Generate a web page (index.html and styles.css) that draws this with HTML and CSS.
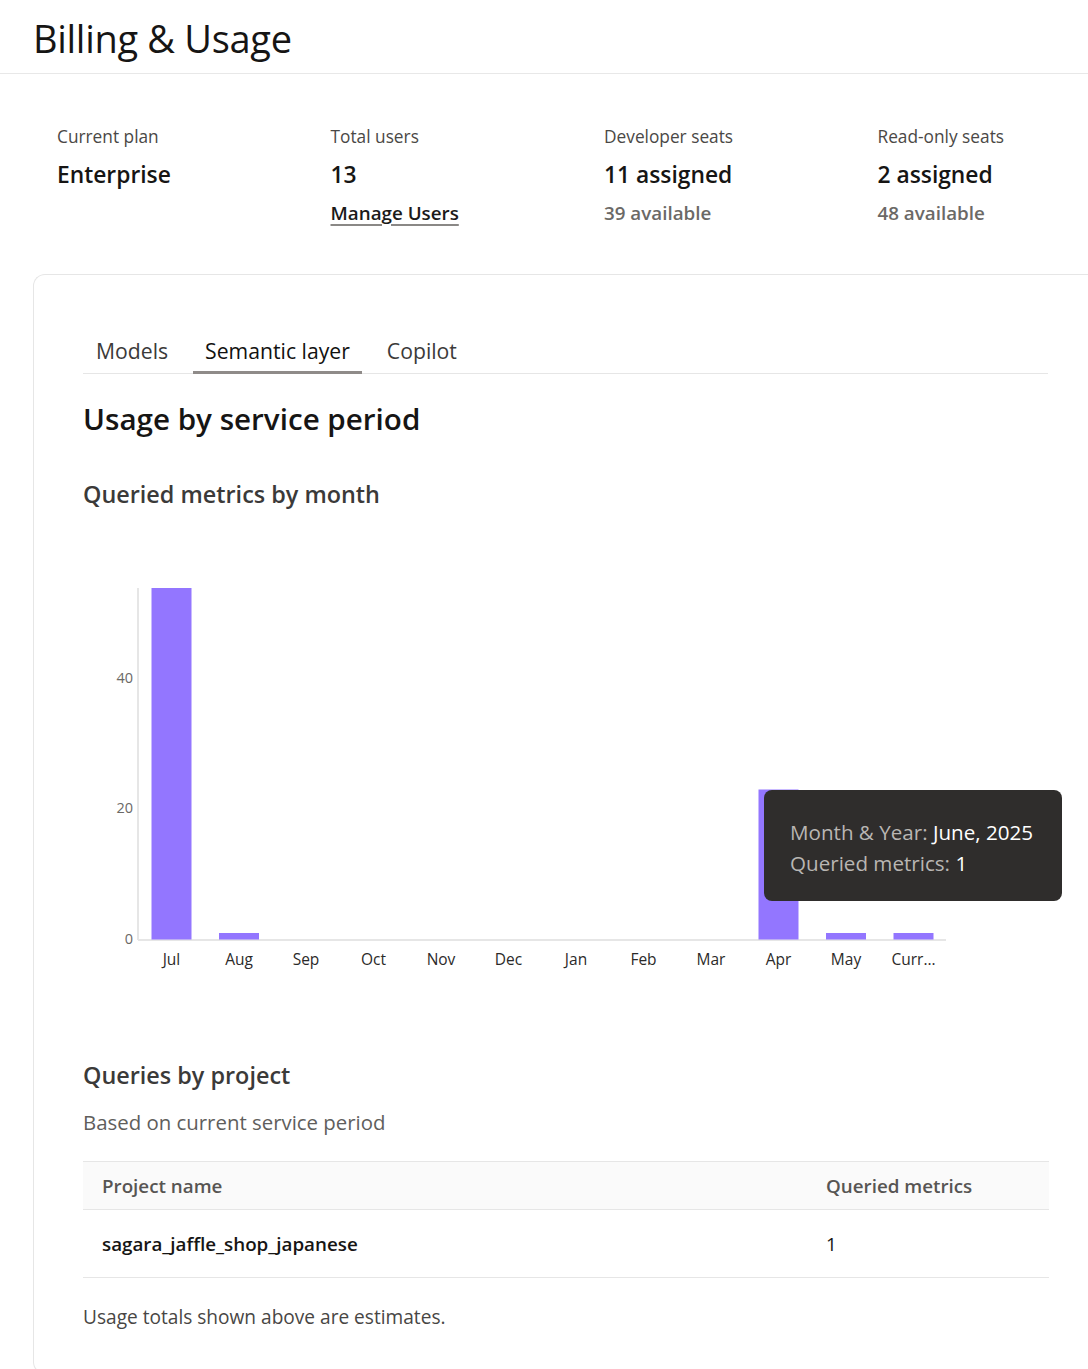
FILE: index.html
```html
<!DOCTYPE html>
<html lang="en">
<head>
<meta charset="utf-8">
<title>Billing &amp; Usage</title>
<link rel="stylesheet" href="styles.css">
</head>
<body>
<header class="page-header">
  <h1 class="page-title">Billing &amp; Usage</h1>
</header>

<section class="stats">
  <div class="stat">
    <div class="stat-label">Current plan</div>
    <div class="stat-value">Enterprise</div>
  </div>
  <div class="stat">
    <div class="stat-label">Total users</div>
    <div class="stat-value">13</div>
    <a class="stat-link" href="#">Manage Users</a>
  </div>
  <div class="stat">
    <div class="stat-label">Developer seats</div>
    <div class="stat-value">11 assigned</div>
    <div class="stat-sub">39 available</div>
  </div>
  <div class="stat">
    <div class="stat-label">Read-only seats</div>
    <div class="stat-value">2 assigned</div>
    <div class="stat-sub">48 available</div>
  </div>
</section>

<section class="card">
  <nav class="tabs">
    <span class="tab">Models</span>
    <span class="tab tab-active">Semantic layer</span>
    <span class="tab">Copilot</span>
  </nav>

  <h2 class="section-title">Usage by service period</h2>
  <h3 class="sub-title">Queried metrics by month</h3>

  <div class="chart">
    <svg class="chart-svg" width="965" height="490" viewBox="0 0 965 490">
      <line class="axis" x1="55" y1="78" x2="55" y2="430"/>
      <line class="axis" x1="55" y1="430" x2="863" y2="430"/>
      <text class="ytick" x="50" y="173">40</text>
      <text class="ytick" x="50" y="303">20</text>
      <text class="ytick" x="50" y="434">0</text>

      <rect class="bar" x="68.5" y="78" width="40" height="351.5"/>
      <rect class="bar" x="136" y="423" width="40" height="6.5"/>
      <rect class="bar" x="675.5" y="279.5" width="40" height="150"/>
      <rect class="bar" x="743" y="423" width="40" height="6.5"/>
      <rect class="bar" x="810.5" y="423" width="40" height="6.5"/>

      <text class="xtick" x="88.5" y="455">Jul</text>
      <text class="xtick" x="156" y="455">Aug</text>
      <text class="xtick" x="223" y="455">Sep</text>
      <text class="xtick" x="290.5" y="455">Oct</text>
      <text class="xtick" x="358" y="455">Nov</text>
      <text class="xtick" x="425.5" y="455">Dec</text>
      <text class="xtick" x="493" y="455">Jan</text>
      <text class="xtick" x="560.5" y="455">Feb</text>
      <text class="xtick" x="628" y="455">Mar</text>
      <text class="xtick" x="695.5" y="455">Apr</text>
      <text class="xtick" x="763" y="455">May</text>
      <text class="xtick" x="830.5" y="455">Curr…</text>
    </svg>
    <div class="tooltip">
      <div><span class="tt-label">Month &amp; Year:</span> <span class="tt-value">June, 2025</span></div>
      <div><span class="tt-label">Queried metrics:</span> <span class="tt-value">1</span></div>
    </div>
  </div>

  <h3 class="sub-title projects-title">Queries by project</h3>
  <p class="caption">Based on current service period</p>

  <table class="project-table">
    <colgroup>
      <col class="col-first">
      <col>
    </colgroup>
    <thead>
      <tr><th>Project name</th><th>Queried metrics</th></tr>
    </thead>
    <tbody>
      <tr><td class="project">sagara_jaffle_shop_japanese</td><td class="count">1</td></tr>
    </tbody>
  </table>

  <p class="footnote">Usage totals shown above are estimates.</p>
</section>
</body>
</html>
```

FILE: styles.css
```css
html, body {
  margin: 0;
  padding: 0;
  background: #ffffff;
  overflow-x: hidden;
}

body {
  font-family: "Open Sans", "Noto Sans", sans-serif;
  color: #1b1a19;
  width: 1088px;
}

.page-header {
  padding: 14px 33px 11px;
  border-bottom: 1px solid #e8e8e8;
}

.page-title {
  margin: 0;
  font-size: 38px;
  line-height: 48px;
  font-weight: 400;
  color: #161514;
  letter-spacing: -0.3px;
}

.stats {
  display: grid;
  grid-template-columns: 273.5px 273.5px 273.5px 1fr;
  padding-left: 57px;
  margin-top: 51px;
}

.stat-label {
  font-size: 17.3px;
  line-height: 24px;
  color: #4a4846;
}

.stat-value {
  margin-top: 10px;
  font-size: 22.8px;
  line-height: 32px;
  font-weight: 600;
  color: #161514;
}

.stat-link,
.stat-sub {
  display: block;
  margin-top: 9px;
  font-size: 18.8px;
  line-height: 26px;
  font-weight: 600;
}

.stat-link {
  color: #1b1a19;
  text-decoration: underline;
  text-decoration-color: #8a8886;
  text-decoration-thickness: 2px;
  text-underline-offset: 4px;
  width: max-content;
}

.stat-sub {
  color: #6b6966;
}

.card {
  margin: 48px 0 0 33px;
  width: 1055px;
  box-sizing: border-box;
  border: 1px solid #e6e6e6;
  border-right: none;
  border-radius: 12px 0 0 12px;
  padding: 62px 40px 40px 49px;
  min-height: 1100px;
}

.tabs {
  display: flex;
  gap: 13px;
  border-bottom: 1px solid #e6e6e6;
}

.tab {
  padding: 0 12px 6px;
  font-size: 21.2px;
  line-height: 28px;
  color: #3b3a39;
  margin-bottom: -1px;
  border-bottom: 3px solid transparent;
}

.tab:first-child {
  margin-left: 1px;
}

.tab-active {
  color: #111110;
  border-bottom-color: #8f8b89;
}

.section-title {
  margin: 25px 0 0;
  font-size: 29.6px;
  line-height: 40px;
  font-weight: 600;
  color: #161514;
}

.sub-title {
  margin: 39px 0 0;
  font-size: 23.4px;
  line-height: 32px;
  font-weight: 600;
  color: #3b3a39;
}

.chart {
  position: relative;
  width: 965px;
  height: 490px;
}

.chart-svg {
  display: block;
  font-family: "Open Sans", "Noto Sans", sans-serif;
}

.axis {
  stroke: #e6e6e6;
  stroke-width: 2;
}

.bar {
  fill: #9376ff;
}

.ytick {
  font-size: 14.5px;
  fill: #6b6966;
  text-anchor: end;
}

.xtick {
  font-size: 15.5px;
  fill: #2b2a29;
  text-anchor: middle;
}

.tooltip {
  position: absolute;
  left: 681px;
  top: 280px;
  width: 298px;
  height: 111px;
  box-sizing: border-box;
  padding: 27px 0 0 26px;
  background: #2f2d2c;
  border-radius: 8px;
  font-size: 20.6px;
  line-height: 31px;
  white-space: nowrap;
}

.tt-label {
  color: #b9b6b3;
}

.tt-value {
  color: #ffffff;
}

.projects-title {
  margin-top: 59px;
}

.caption {
  margin: 17px 0 0;
  font-size: 20.4px;
  line-height: 28px;
  color: #605e5c;
}

.project-table {
  margin-top: 25px;
  width: 966px;
  border-collapse: collapse;
  table-layout: fixed;
}

.col-first {
  width: 743px;
}

.project-table th,
.project-table td {
  text-align: left;
  padding: 0 0 0 19px;
}

.project-table th {
  height: 47px;
  background: #fafafa;
  border-top: 1px solid #e6e6e6;
  border-bottom: 1px solid #e6e6e6;
  font-size: 18.8px;
  font-weight: 600;
  color: #575553;
}

.project-table td {
  height: 67px;
  border-bottom: 1px solid #e6e6e6;
  font-size: 18.8px;
  color: #161514;
}

.project-table .project {
  font-weight: 600;
}

.project-table th:last-child,
.project-table td:last-child {
  padding-left: 0;
}

.footnote {
  margin: 25px 0 0;
  font-size: 19.1px;
  line-height: 28px;
  color: #484644;
}
```
